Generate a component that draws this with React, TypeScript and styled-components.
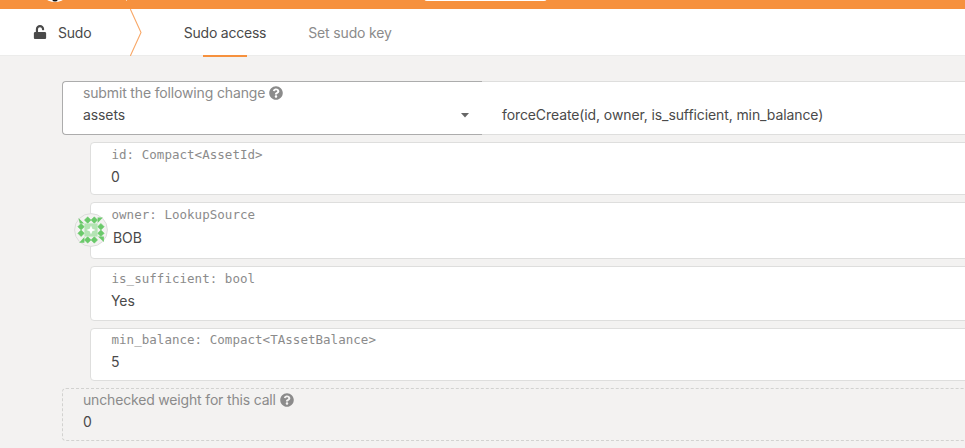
import React from 'react';
import styled, { createGlobalStyle } from 'styled-components';
import { FaQuestionCircle, FaUnlock } from 'react-icons/fa';

const GlobalStyle = createGlobalStyle`
  * { box-sizing: border-box; }
  html, body { margin: 0; padding: 0; }
  body {
    background: #f3f2f1;
    color: #4a4a4a;
    font: 14px/20px Inter, "Liberation Sans", sans-serif;
    overflow: hidden;
  }
`;

const Page = styled.div`
  height: 448px;
  overflow: hidden;
`;

const TopBar = styled.header`
  position: relative;
  height: 9px;
  background: #f6913e;
  overflow: hidden;
`;

const Logo = styled.svg`
  position: absolute;
  left: 38px;
  top: -32px;
`;

const MenuTab = styled.div`
  position: absolute;
  left: 424px;
  top: -9px;
  width: 123px;
  height: 10px;
  background: #fff;
  border-radius: 0 0 3px 3px;
`;

const Divider = styled.div`
  position: absolute;
  left: 126px;
  top: 0;
  width: 1px;
  height: 1px;
  background: #fbd0ab;
`;

const TabBar = styled.nav`
  display: flex;
  height: 47px;
  background: #fff;
  border-bottom: 1px solid #ececeb;
`;

const Section = styled.div`
  display: flex;
  align-items: center;
  width: 130px;
  padding: 2px 0 0 33px;
  gap: 11px;

  svg {
    margin-top: -3px;
  }
`;

const Chevron = styled.svg`
  flex: none;
  width: 12px;
  height: 47px;
`;

const Tab = styled.div<{ $active?: boolean; $width: number }>`
  display: flex;
  flex-direction: column;
  align-items: center;
  width: ${p => p.$width}px;
  padding-top: 14px;
  color: ${p => (p.$active ? '#4a4a4a' : '#8b8b8b')};
  white-space: nowrap;

  &::after {
    content: '';
    flex: none;
    width: 44px;
    height: 2px;
    margin-top: 12px;
    background: ${p => (p.$active ? '#f6913e' : 'transparent')};
  }
`;

const Tabs = styled.div`
  display: flex;
  padding-left: 42px;
  gap: 42px;
`;

const Text = styled.span<{ $spacing?: number }>`
  white-space: nowrap;
  letter-spacing: ${p => p.$spacing ?? 0}px;
`;

const Form = styled.main`
  display: flex;
  flex-direction: column;
  gap: 7px;
  width: 1100px;
  padding: 25px 0 0 62px;
`;

const CallRow = styled.div`
  display: flex;
  height: 54px;
`;

const Select = styled.div`
  display: flex;
  justify-content: space-between;
  width: 420px;
  padding: 0 13px 0 20px;
  background: #fff;
  border: 1px solid #acacac;
  border-right: 0;
  border-radius: 4px 0 0 4px;
`;

const Caret = styled.svg`
  width: 8px;
  height: 5px;
  margin-top: 31px;
`;

const Method = styled.div`
  flex: 1;
  padding: 23px 0 0 20px;
  background: #fff;
  border: solid #dededd;
  border-width: 1px 0;
`;

const Params = styled.div`
  display: flex;
  flex-direction: column;
  gap: 7px;
  padding-left: 28px;
`;

const Field = styled.div<{ $height: number; $top: number; $dashed?: boolean }>`
  position: relative;
  height: ${p => p.$height}px;
  padding: ${p => p.$top}px 0 0 20px;
  background: ${p => (p.$dashed ? 'transparent' : '#fff')};
  border: 1px ${p => (p.$dashed ? 'dashed #d2d2d0' : 'solid #dededd')};
  border-radius: 4px;
`;

const Label = styled.div<{ $mono?: boolean }>`
  display: flex;
  align-items: center;
  gap: 4px;
  height: 21px;
  color: #8b8b8b;
  ${p => p.$mono && 'padding-left: 0.5px; font-family: "DejaVu Sans Mono", monospace; font-size: 12.5px;'}
`;

const Value = styled.div<{ $account?: boolean }>`
  padding: ${p => (p.$account ? '3px 0 0 2px' : '2px 0 0')};
`;

const Identicon = styled.svg`
  position: absolute;
  left: -17px;
  top: 10px;
`;

const Help = styled(FaQuestionCircle)`
  flex: none;
  width: 14px;
  height: 14px;
`;

const diamonds = [[30, 10], [50, 10], [30, 70], [50, 70], [10, 30], [10, 50], [70, 30], [70, 50]];

const AccountIcon = () => (
  <Identicon width="34" height="34" viewBox="0 0 34 34">
    <circle cx="17" cy="17" r="16.4" fill="#f3f2f1" stroke="#dcdcdb" />
    <g transform="translate(3.8 3.8) scale(.33)" fill="#6ac96a">
      {diamonds.map(([x, y]) => (
        <path key={`${x}-${y}`} d={`M${x} ${y - 10}l10 10-10 10-10-10z`} stroke="#6ac96a" strokeWidth="1.5" />
      ))}
      <path d="M2 4L19 20H6zM60 2H76L60 19zM61 60H79V76zM20 61V79H4z" />
      <path fill="#b4e4b4" d="M20 20H60V60H20z" />
      <path fill="#fff" d="M40 26l4 10 10 4-10 4-4 10-4-10-10-4 10-4z" />
    </g>
  </Identicon>
);

const params = [
  { label: 'id: Compact<AssetId>', value: '0', height: 53, top: 1 },
  { label: 'owner: LookupSource', value: 'BOB', height: 57, top: 1, account: true },
  { label: 'is_sufficient: bool', value: 'Yes', height: 55, top: 1 },
  { label: 'min_balance: Compact<TAssetBalance>', value: '5', height: 53, top: 0 },
];

export default function App() {
  return (
    <Page>
      <GlobalStyle />
      <TopBar>
        <Logo width="34" height="34" viewBox="0 0 34 34">
          <circle cx="17" cy="17" r="17" fill="#fff" />
          <circle cx="17" cy="30.5" r="3" fill="#111" />
        </Logo>
        <Divider />
        <MenuTab />
      </TopBar>
      <TabBar>
        <Section>
          <FaUnlock size={14} />
          <Text $spacing={-0.2}>Sudo</Text>
        </Section>
        <Chevron viewBox="0 0 12 47">
          <path d="M.3 0L11 23.5 .3 47" fill="none" stroke="#f8a868" strokeWidth="1.1" />
        </Chevron>
        <Tabs>
          <Tab $active $width={82}><Text $spacing={-0.22}>Sudo access</Text></Tab>
          <Tab $width={84}><Text $spacing={-0.16}>Set sudo key</Text></Tab>
        </Tabs>
      </TabBar>
      <Form>
        <CallRow>
          <Select>
            <div>
              <Label><Text $spacing={-0.15}>submit the following change</Text><Help /></Label>
              <Value><Text $spacing={-0.1}>assets</Text></Value>
            </div>
            <Caret viewBox="0 0 8 5"><path d="M0 0H8L4 4.5z" fill="#666" /></Caret>
          </Select>
          <Method><Text $spacing={-0.1}>forceCreate(id, owner, is_sufficient, min_balance)</Text></Method>
        </CallRow>
        <Params>
          {params.map(p => (
            <Field key={p.label} $height={p.height} $top={p.top}>
              {p.account && <AccountIcon />}
              <Label $mono><Text $spacing={0.03}>{p.label}</Text></Label>
              <Value $account={p.account}><Text $spacing={-0.1}>{p.value}</Text></Value>
            </Field>
          ))}
        </Params>
        <Field $height={53} $top={0} $dashed>
          <Label><Text $spacing={-0.17}>unchecked weight for this call</Text><Help /></Label>
          <Value><Text>0</Text></Value>
        </Field>
      </Form>
    </Page>
  );
}
